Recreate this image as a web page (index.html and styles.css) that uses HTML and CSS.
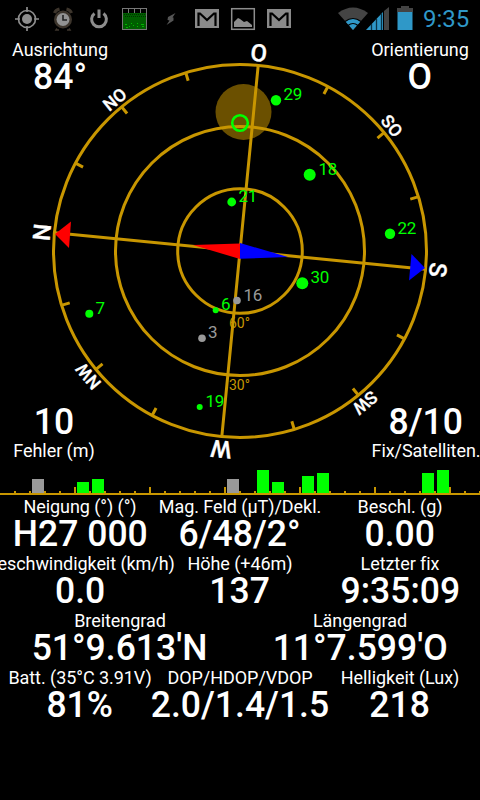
FILE: index.html
```
<!DOCTYPE html>
<html lang="de">
<head>
<meta charset="utf-8">
<title>GPS Status</title>
<link rel="stylesheet" href="styles.css">
</head>
<body>
<main class="screen">
  <header class="statusbar">
    <svg class="tray" viewBox="0 0 300 38">
      <g fill="none" stroke="#8d8d8d" stroke-width="1.7">
        <circle cx="27" cy="19" r="8.5"/>
        <path d="M27 7v5M27 26v5M15 19h5M34 19h5"/>
        <path stroke-width="3" d="M94.500 13.500A7.400 7.400 0 1 0 103.500 13.500M99 9.500V18"/>
      </g>
      <circle cx="27" cy="19" r="5" fill="#8d8d8d"/>
      <g fill="none" stroke="#3d352c" stroke-width="3">
        <circle cx="63" cy="19.500" r="7.500"/>
        <path d="M54.500 13q1-3 5-4M66.500 9q4 1 5 4"/>
        <path stroke-width="1.500" d="M57 28.500l-1 1.500h3M69 28.500l1 1.500h-3"/>
      </g>
      <circle cx="63" cy="19.500" r="6.500" fill="#929292"/>
      <path d="M63 15v5h4" fill="none" stroke="#222" stroke-width="1.600"/>
      <rect x="122.500" y="8.500" width="24" height="21" fill="#005e00" stroke="#777"/>
      <path d="M123 9h23v4h-23z" fill="#000"/>
      <path d="M128.500 9v4M134.500 9v4M140.500 9v4" stroke="#777"/>
      <path d="M124 14.500h21M125 16.500h21" stroke="#003000" stroke-dasharray="1 1"/>
      <path d="M125 24.500h2M129 26.500h1M133 25.500h1M137 26.500h1M141 24.500h3M126 27.500h2M131 23.500h1M137 23.500h1M142 26.500h2" stroke="#00b800"/>
      <path d="M175.500 13l-7.500 4-.500 3 2 .500-3 4.500 7-4.500v-3h-1z" fill="#555"/>
      <g id="mail">
        <rect x="195" y="9" width="24" height="19" fill="#8a8a8a"/>
        <path d="M198.500 26V13.500h1.500l7 6.500 7-6.500h1.500V26" fill="none" stroke="#000" stroke-width="2.200"/>
      </g>
      <rect x="231.700" y="8.700" width="22.600" height="20.600" fill="#000" stroke="#8d8d8d" stroke-width="1.500"/>
      <path d="M234 27v-5l4-4 2 1 4 3 3-1 5 4v2z" fill="#8d8d8d"/>
      <use href="#mail" x="72"/>
    </svg>
    <svg class="signals" viewBox="336 0 80 38">
      <path d="M353 30L338 13Q353 2 368 13z" fill="#444"/>
      <path d="M353 30L345.500 21.500Q353 15.500 360.500 21.500z" fill="#2f98c8"/>
      <path d="M345 21.500Q353 15.500 361 21.500M348 25.500Q353 21.500 358 25.500" fill="none" stroke="#000" stroke-width="1.200"/>
      <path d="M366 30L383 12V30z" fill="#2f98c8"/>
      <path d="M371.500 24v6M376.500 19v11M381.500 13v17" stroke="#0a3448" stroke-width="1.300"/>
      <path d="M384 11l5-4v23h-5z" fill="#444"/>
      <path d="M397 12V8h4V6h8v2h4v4z" fill="#444"/>
      <path d="M397.500 12h15v18h-15z" fill="#2f98c8"/>
    </svg>
    <time class="clock">9:35</time>
  </header>

  <section class="sky">
    <svg class="compass" viewBox="0 38 480 426">
      <circle cx="243.500" cy="112" r="28" fill="#6b5000"/>
      <g class="dial">
        <circle cx="240" cy="251" r="186.500"/>
        <circle cx="240" cy="251" r="124.500"/>
        <circle cx="240" cy="251" r="62.300"/>
        <g transform="rotate(5.600 240 251)">
          <path d="M240 65v372M54 251h372"/>
          <path id="ticks" d="M311.200 79.200l-3 7.400M371.500 119.500l-5.700 5.700M411.800 179.800l-7.400 3"/>
          <use href="#ticks" transform="rotate(90 240 251)"/>
          <use href="#ticks" transform="rotate(180 240 251)"/>
          <use href="#ticks" transform="rotate(270 240 251)"/>
        </g>
      </g>
      <path d="M55 234L71 221.500L69 248z" fill="#f00"/>
      <path d="M425 268L411.500 254L409 280.500z" fill="#00f"/>
      <g class="points" transform="rotate(5.600 240 251)">
        <text class="major" x="239.500" y="60.500">O</text>
        <text x="239.500" y="60.500" transform="rotate(45 240 251)">SO</text>
        <text class="major" x="239.500" y="60.500" transform="rotate(90 240 251)">S</text>
        <text x="239.500" y="60.500" transform="rotate(135 240 251)">SW</text>
        <text class="major" x="239.500" y="60.500" transform="rotate(180 240 251)">W</text>
        <text x="239.500" y="60.500" transform="rotate(225 240 251)">NW</text>
        <text class="major" x="239.500" y="60.500" transform="rotate(270 240 251)">N</text>
        <text x="239.500" y="60.500" transform="rotate(315 240 251)">NO</text>
      </g>
      <g class="rings">
        <text x="229" y="328">60°</text>
        <text x="229" y="390">30°</text>
      </g>
      <path d="M193 245L240 243.500V259z" fill="#f00"/>
      <path d="M240 243L288 257L240 258.800z" fill="#00f"/>
      <circle cx="240" cy="123" r="7.800" fill="none" stroke="#0f0" stroke-width="2.600"/>
      <g class="sats">
        <circle cx="276" cy="100.300" r="5.200"/><text x="283.500" y="100">29</text>
        <circle cx="309.700" cy="174.700" r="6"/><text x="318.500" y="175">18</text>
        <circle cx="231.700" cy="202" r="4.400"/><text x="238.500" y="202">21</text>
        <circle cx="390" cy="233.700" r="5.200"/><text x="397.500" y="234">22</text>
        <circle cx="302.300" cy="283.300" r="6"/><text x="310.500" y="283">30</text>
        <circle cx="215.700" cy="310.300" r="3"/><text x="221" y="309.500">6</text>
        <circle cx="89.300" cy="313.700" r="4"/><text x="95.500" y="314">7</text>
        <circle cx="199.700" cy="407" r="3"/><text x="205.500" y="407">19</text>
      </g>
      <g class="sats idle">
        <circle cx="237" cy="300.500" r="3.800"/><text x="243.500" y="301">16</text>
        <circle cx="202" cy="338.300" r="3.800"/><text x="208" y="338">3</text>
      </g>
    </svg>
    <div class="corner heading"><span class="label">Ausrichtung</span><span class="value">84°</span></div>
    <div class="corner bearing"><span class="label">Orientierung</span><span class="value">O</span></div>
    <div class="corner error"><span class="value">10</span><span class="label">Fehler (m)</span></div>
    <div class="corner fix"><span class="value">8/10</span><span class="label">Fix/Satelliten.</span></div>
  </section>

  <svg class="strength" viewBox="0 464 480 32" shape-rendering="crispEdges">
    <defs>
      <pattern id="minor" x="14" y="491" width="15" height="3" patternUnits="userSpaceOnUse"><rect width="2" height="3" fill="#c89600"/></pattern>
      <pattern id="mid" x="74" y="487" width="75" height="7" patternUnits="userSpaceOnUse"><rect width="2" height="7" fill="#c89600"/></pattern>
    </defs>
    <path d="M10 491h470v3H10z" fill="url(#minor)"/>
    <path d="M10 487h470v7H10z" fill="url(#mid)"/>
    <path d="M32 479h12v14H32zM227 479h12v14h-12z" fill="#999"/>
    <path d="M77 482h12v11H77zM92 479h12v14H92zM257 470h12v23h-12zM272 482h12v11h-12zM302 476h12v17h-12zM317 473h12v20h-12zM422 473h12v20h-12zM437 470h12v23h-12z" fill="#0f0"/>
    <path d="M0 493h480v2H0z" fill="#c89600"/>
  </svg>

  <section class="readouts">
    <div class="row">
      <div class="cell"><span class="label">Neigung (°) (°)</span><span class="value">H27 000</span></div>
      <div class="cell"><span class="label">Mag. Feld (µT)/Dekl.</span><span class="value">6/48/2°</span></div>
      <div class="cell"><span class="label">Beschl. (g)</span><span class="value">0.00</span></div>
    </div>
    <div class="row">
      <div class="cell"><span class="label">Geschwindigkeit (km/h)</span><span class="value">0.0</span></div>
      <div class="cell"><span class="label">Höhe (+46m)</span><span class="value">137</span></div>
      <div class="cell"><span class="label">Letzter fix</span><span class="value">9:35:09</span></div>
    </div>
    <div class="row">
      <div class="cell"><span class="label">Breitengrad</span><span class="value">51°9.613'N</span></div>
      <div class="cell"><span class="label">Längengrad</span><span class="value">11°7.599'O</span></div>
    </div>
    <div class="row">
      <div class="cell"><span class="label">Batt. (35°C 3.91V)</span><span class="value">81%</span></div>
      <div class="cell"><span class="label">DOP/HDOP/VDOP</span><span class="value">2.0/1.4/1.5</span></div>
      <div class="cell"><span class="label">Helligkeit (Lux)</span><span class="value">218</span></div>
    </div>
  </section>
</main>
</body>
</html>
```
FILE: styles.css
```
body {
  margin: 0;
  background: #000;
  color: #fff;
  font-family: Roboto, sans-serif;
}
svg { display: block; }
.screen {
  width: 480px;
  height: 800px;
  overflow: hidden;
  background: #000;
}
.statusbar {
  display: flex;
  align-items: center;
  height: 38px;
}
.tray { width: 300px; height: 38px; margin-right: 36px; }
.signals { width: 80px; height: 38px; }
.clock {
  margin-left: 7px;
  color: #2f98c8;
  font-size: 24px;
  line-height: 40px;
}
.sky { position: relative; height: 426px; }
.compass { width: 480px; height: 426px; }
.dial { fill: none; stroke: #c89600; stroke-width: 3; }
.points {
  fill: #fff;
  font-size: 17.5px;
  font-weight: 500;
  stroke: #fff;
  stroke-width: 0.3px;
  text-anchor: middle;
}
.points .major { font-size: 24px; }
.rings { fill: #c89600; font-size: 14px; }
.sats { fill: #0f0; font-size: 17px; letter-spacing: -0.2px; }
.idle { fill: #999; }
.label, .value { display: block; white-space: nowrap; }
.label { font-size: 18px; line-height: 22px; letter-spacing: -0.06px; }
.value {
  font-size: 37px;
  font-weight: 500;
  line-height: 35px;
  margin-top: -2px;
  transform: scaleX(0.96);
}
.corner {
  position: absolute;
  display: flex;
  flex-direction: column;
  align-items: center;
  width: 120px;
}
.heading { left: 0; top: 1px; }
.bearing { right: 0; top: 1px; }
.error { left: -6px; bottom: 2px; }
.fix { right: -6px; bottom: 2px; }
.error .value, .fix .value { margin-bottom: 1px; }
.strength { width: 480px; height: 32px; }
.row { display: flex; height: 57px; }
.cell {
  flex: 1 1 0;
  min-width: 0;
  display: flex;
  flex-direction: column;
  align-items: center;
}
```
